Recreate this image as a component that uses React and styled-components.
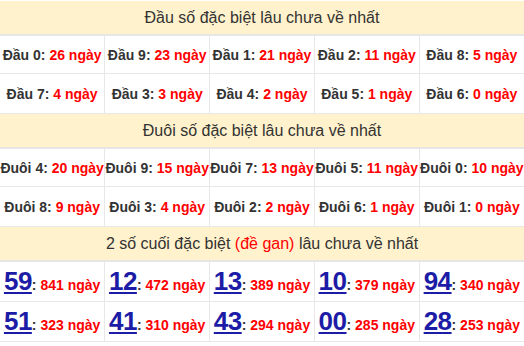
import { createGlobalStyle, styled } from "styled-components";

const GlobalStyle = createGlobalStyle`
  body {
    margin: 0;
    background: #fff;
    font-family: "Liberation Sans", Arial, sans-serif;
  }
`;

const Table = styled.table`
  width: 524px;
  border-collapse: collapse;
  table-layout: fixed;
  margin-top: 1px;
`;

const HeadCell = styled.th`
  background-color: #fff2cc;
  color: #333;
  font-size: 16px;
  font-weight: normal;
  height: 33px;
  padding: 0;
  border-bottom: 2px solid #e6e6e6;
  text-align: center;
`;

const Cell = styled.td`
  border: 1px solid #e8e8e8;
  border-top: none;
  height: ${(p) => p.$h || 37}px;
  padding: 0;
  text-align: center;
  font-size: 14px;
  font-weight: bold;
  color: #333;
  white-space: nowrap;
  &:first-child { border-left: none; }
  &:last-child { border-right: none; }
`;

const Days = styled.span`
  color: #ff0000;
`;

const Gan = styled.span`
  color: #ff0000;
`;

const Num = styled.a`
  color: #1c1ca6;
  font-size: 26px;
  font-weight: bold;
  text-decoration: underline;
  letter-spacing: -0.5px;
`;

const Colon = styled.span`
  color: #333;
  font-size: 14px;
`;

const dau = [
  [["Đầu 0", 26], ["Đầu 9", 23], ["Đầu 1", 21], ["Đầu 2", 11], ["Đầu 8", 5]],
  [["Đầu 7", 4], ["Đầu 3", 3], ["Đầu 4", 2], ["Đầu 5", 1], ["Đầu 6", 0]],
];

const duoi = [
  [["Đuôi 4", 20], ["Đuôi 9", 15], ["Đuôi 7", 13], ["Đuôi 5", 11], ["Đuôi 0", 10]],
  [["Đuôi 8", 9], ["Đuôi 3", 4], ["Đuôi 2", 2], ["Đuôi 6", 1], ["Đuôi 1", 0]],
];

const gan = [
  [["59", 841], ["12", 472], ["13", 389], ["10", 379], ["94", 340]],
  [["51", 323], ["41", 310], ["43", 294], ["00", 285], ["28", 253]],
];

function Header({ children }) {
  return (
    <tr>
      <HeadCell colSpan={5}>{children}</HeadCell>
    </tr>
  );
}

function CountRows({ rows }) {
  return rows.map((row, i) => (
    <tr key={i}>
      {row.map(([label, n]) => (
        <Cell key={label} $h={i === 0 ? 37 : 39}>
          {label}: <Days>{n} ngày</Days>
        </Cell>
      ))}
    </tr>
  ));
}

export default function App() {
  return (
    <>
      <GlobalStyle />
      <Table>
        <tbody>
          <Header>Đầu số đặc biệt lâu chưa về nhất</Header>
          <CountRows rows={dau} />
          <Header>Đuôi số đặc biệt lâu chưa về nhất</Header>
          <CountRows rows={duoi} />
          <Header>
            2 số cuối đặc biệt <Gan>(đề gan)</Gan> lâu chưa về nhất
          </Header>
          {gan.map((row, i) => (
            <tr key={i}>
              {row.map(([num, n]) => (
                <Cell key={num} $h={39}>
                  <Num href="#">{num}</Num>
                  <Colon>: </Colon>
                  <Days>{n} ngày</Days>
                </Cell>
              ))}
            </tr>
          ))}
        </tbody>
      </Table>
    </>
  );
}
